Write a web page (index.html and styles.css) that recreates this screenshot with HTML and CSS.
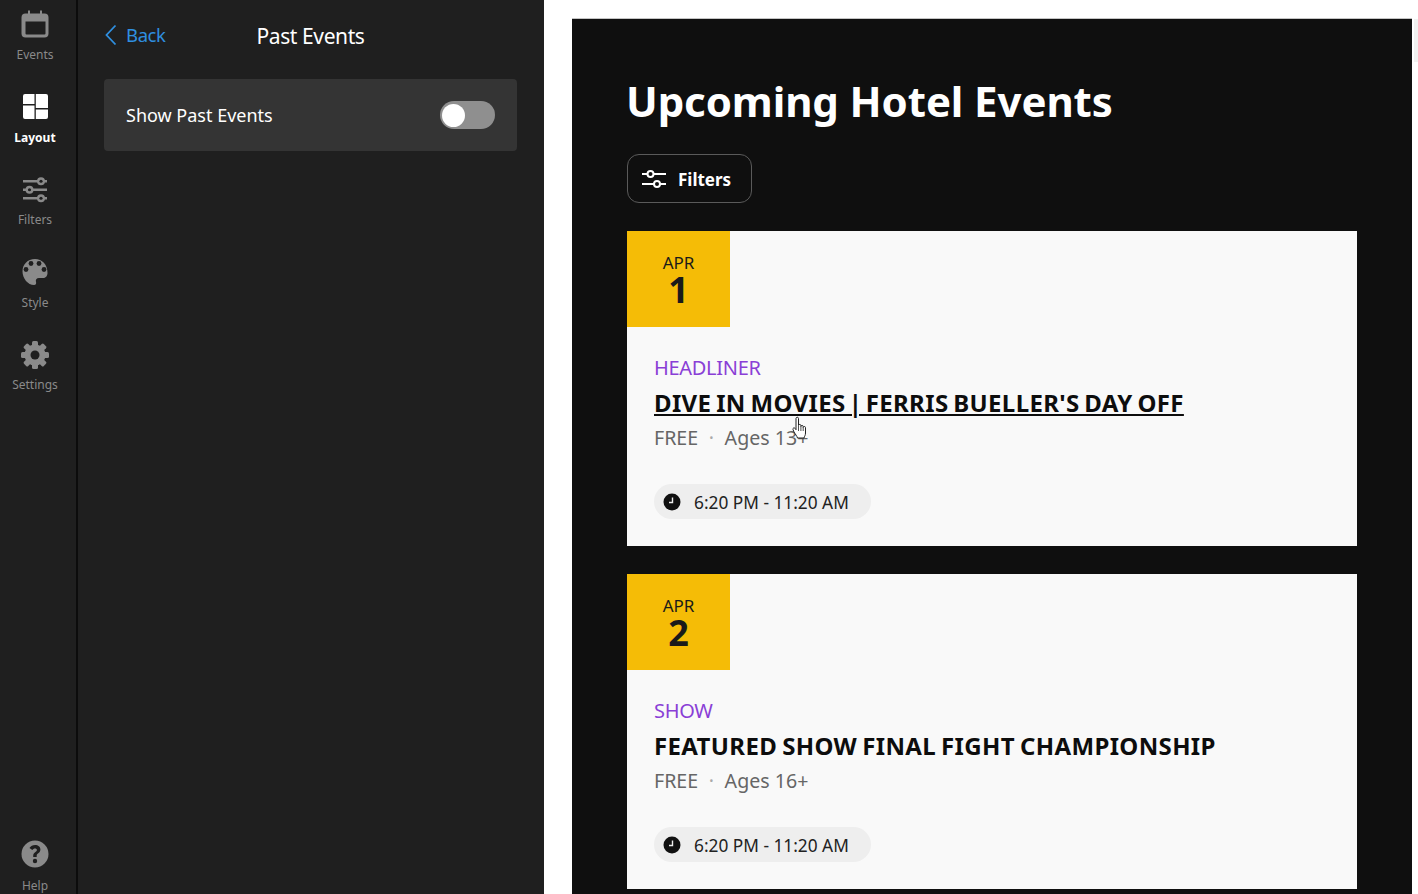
FILE: index.html
```html
<!DOCTYPE html>
<html lang="en">
<head>
  <meta charset="UTF-8">
  <meta name="viewport" content="width=device-width, initial-scale=1.0">
  <title>Upcoming Hotel Events</title>
  <link rel="stylesheet" href="styles.css">
</head>
<body>
  <!-- Editor icon rail -->
  <nav class="rail">
    <a class="rail-item">
      <svg class="rail-icon" viewBox="0 0 30 30"><path fill-rule="evenodd" d="M8 .5h2v3h10v-3h2v3h2.500a4 4 0 0 1 4 4v16a4 4 0 0 1-4 4h-19a4 4 0 0 1-4-4v-16a4 4 0 0 1 4-4H8zM5.500 11.500v12a1 1 0 0 0 1 1h18a1 1 0 0 0 1-1v-12z"/></svg>
      <span>Events</span>
    </a>
    <a class="rail-item active">
      <svg class="rail-icon" viewBox="0 0 30 30"><path d="M5 2h9.500v10H3V4a2 2 0 0 1 2-2zM15.800 2H26a2 2 0 0 1 2 2v12H15.800zM3 13.500h11.500V27H5a2 2 0 0 1-2-2zM15.800 17.500H28V25a2 2 0 0 1-2 2H15.800z"/></svg>
      <span>Layout</span>
    </a>
    <a class="rail-item">
      <svg class="rail-icon" viewBox="0 0 30 30">
        <path d="M3 5h24v2.500H3zM3 13.500h24V16H3zM3 22h24v2.500H3z"/>
        <circle cx="21" cy="6.250" r="4"/><circle cx="9.500" cy="14.750" r="4"/><circle cx="21" cy="23.250" r="4"/>
        <circle class="hole" cx="21" cy="6.250" r="1.600"/><circle class="hole" cx="9.500" cy="14.750" r="1.600"/><circle class="hole" cx="21" cy="23.250" r="1.600"/>
      </svg>
      <span>Filters</span>
    </a>
    <a class="rail-item">
      <svg class="rail-icon" viewBox="0 0 30 30">
        <path d="M15 2C7.500 2 2.500 7.500 2.500 14.500S8 28 14 28c2 0 2.500-1.500 2-3-.7-2 .5-4 3-4h4c2.500 0 4.500-2 4.500-5C27.500 7.500 22 2 15 2z"/>
        <circle class="hole" cx="11" cy="6.500" r="2.400"/><circle class="hole" cx="19" cy="6.500" r="2.400"/><circle class="hole" cx="24" cy="12.500" r="2.400"/><circle class="hole" cx="6" cy="12.500" r="2.400"/>
      </svg>
      <span>Style</span>
    </a>
    <a class="rail-item">
      <svg class="rail-icon" viewBox="0 0 30 30">
        <circle cx="15" cy="15" r="10.500"/>
        <rect x="12" y="1" width="6" height="28" rx="1.500"/>
        <rect x="12" y="1" width="6" height="28" rx="1.500" transform="rotate(45 15 15)"/>
        <rect x="12" y="1" width="6" height="28" rx="1.500" transform="rotate(90 15 15)"/>
        <rect x="12" y="1" width="6" height="28" rx="1.500" transform="rotate(135 15 15)"/>
        <circle class="hole" cx="15" cy="15" r="4.500"/>
      </svg>
      <span>Settings</span>
    </a>
    <a class="rail-item rail-help">
      <svg class="rail-icon" viewBox="0 0 30 30"><path fill-rule="evenodd" d="M15 1.500a13.500 13.500 0 1 0 0 27 13.500 13.500 0 0 0 0-27zM16.700 18h-3.500v-1.300c0-2 1-2.900 2.200-3.800 1-.7 1.500-1.200 1.500-2 0-1-.8-1.500-1.900-1.500-1.200 0-2 .6-2.700 1.700L9.500 9C10.700 7 12.600 6 15.100 6c3 0 5.300 1.600 5.300 4.500 0 2-1.100 3-2.400 4-1 .7-1.300 1.200-1.300 2zM15 19.800a2.200 2.200 0 1 1 0 4.400 2.200 2.200 0 0 1 0-4.400z"/></svg>
      <span>Help</span>
    </a>
  </nav>

  <!-- Settings panel -->
  <aside class="panel">
    <div class="panel-head">
      <a class="back">
        <svg class="back-icon" viewBox="0 0 12 22"><path d="M10.500 1.500 1.500 11l9 9.500"/></svg>
        <span>Back</span>
      </a>
      <h2>Past Events</h2>
    </div>
    <div class="setting">
      <span>Show Past Events</span>
      <div class="toggle"><div class="knob"></div></div>
    </div>
  </aside>

  <!-- Widget preview -->
  <main class="stage">
    <div class="preview">
      <h1>Upcoming Hotel Events</h1>
      <button class="filters">
        <svg class="filters-icon" viewBox="0 0 24 18"><path d="M0 4h5.500M11.500 4H24M0 14h12M18 14h6"/><circle cx="8.500" cy="4" r="3"/><circle cx="15" cy="14" r="3"/></svg>
        <span class="filters-label">Filters</span>
      </button>

      <article class="card">
        <div class="date"><span class="month">APR</span><span class="day">1</span></div>
        <div class="card-body">
          <div class="tag">HEADLINER</div>
          <h3 class="hovered">DIVE IN MOVIES <span class="pipe">|</span> FERRIS BUELLER'S DAY OFF</h3>
          <p class="meta">FREE <i>·</i> Ages 13+</p>
          <div class="time">
            <svg class="clock" viewBox="0 0 18 18"><circle cx="9" cy="9" r="8.500" fill="#111"/><path d="M9.500 4.500v5H6" fill="none" stroke="#eee" stroke-width="1.400"/></svg>
            <span class="time-label">6:20 PM - 11:20 AM</span>
          </div>
        </div>
        <svg class="cursor" viewBox="0 0 16 24"><path d="M4 2.500c0-1.700 2.500-1.700 2.500 0v7c0-1.400 2.400-1.400 2.400 0v1c0-1.400 2.300-1.400 2.300 0v1c0-1.300 2.300-1.300 2.300 0v5.500c0 2.500-1 3-1.500 5H5.500c-.5-2-2-3.500-3.500-6l-1-2.500c-.5-1.500 1.300-2.200 2.200-1l.8 1.200z" fill="#fff" stroke="#222" stroke-width="1"/><path d="M6.500 10v5M8.900 10.500V15M11.200 11.500V15" fill="none" stroke="#222" stroke-width=".8"/></svg>
      </article>

      <article class="card">
        <div class="date"><span class="month">APR</span><span class="day">2</span></div>
        <div class="card-body">
          <div class="tag">SHOW</div>
          <h3>FEATURED SHOW FINAL FIGHT CHAMPIONSHIP</h3>
          <p class="meta">FREE <i>·</i> Ages 16+</p>
          <div class="time">
            <svg class="clock" viewBox="0 0 18 18"><circle cx="9" cy="9" r="8.500" fill="#111"/><path d="M9.500 4.500v5H6" fill="none" stroke="#eee" stroke-width="1.400"/></svg>
            <span class="time-label">6:20 PM - 11:20 AM</span>
          </div>
        </div>
      </article>
    </div>
    <div class="scroll-thumb"></div>
  </main>
</body>
</html>
```

FILE: styles.css
```css
* {
  box-sizing: border-box;
}

body {
  margin: 0;
  height: 894px;
  overflow: hidden;
  display: flex;
  background-color: #ffffff;
  font-family: 'Noto Sans', 'Open Sans', sans-serif;
}

/* Icon rail */
.rail {
  width: 78px;
  height: 894px;
  flex-shrink: 0;
  display: flex;
  flex-direction: column;
  align-items: stretch;
  padding: 9.5px 6px 0 0;
  background-color: #1f1f1f;
  border-right: 2px solid #0c0c0c;
}

.rail-item {
  height: 82.5px;
  display: flex;
  flex-direction: column;
  align-items: center;
  color: #8a8a8a;
  font-size: 12px;
  line-height: 16px;
}

.rail-item.active {
  color: #ffffff;
  font-weight: 700;
}

.rail-icon {
  width: 30px;
  height: 30px;
  margin-bottom: 7.5px;
  fill: currentColor;
}

.rail-icon .hole {
  fill: #1f1f1f;
}

.rail-help {
  margin-top: auto;
  height: 55px;
}

.rail-help .rail-icon {
  margin-bottom: 9px;
}

/* Settings panel */
.panel {
  width: 466px;
  flex-shrink: 0;
  padding: 0 27px 0 26px;
  background-color: #1f1f1f;
  color: #ffffff;
}

.panel-head {
  height: 79px;
  position: relative;
  display: flex;
  justify-content: center;
  align-items: center;
  padding-bottom: 7px;
}

.panel-head h2 {
  margin: 0;
  font-size: 21px;
  font-weight: 400;
  letter-spacing: -0.4px;
}

.back {
  position: absolute;
  left: 1px;
  top: 24px;
  display: flex;
  align-items: center;
  gap: 9px;
  color: #2f8fe0;
  font-size: 18.5px;
  line-height: 22px;
  letter-spacing: -0.4px;
}

.back-icon {
  width: 12px;
  height: 22px;
  fill: none;
  stroke: currentColor;
  stroke-width: 1.8;
}

.setting {
  height: 72px;
  display: flex;
  justify-content: space-between;
  align-items: center;
  padding: 0 22px;
  background-color: #343434;
  border-radius: 4px;
  font-size: 18px;
}

.toggle {
  width: 55px;
  height: 28px;
  padding: 2.5px 2px;
  background-color: #8f8f8f;
  border-radius: 14px;
}

.knob {
  width: 23px;
  height: 23px;
  background-color: #ffffff;
  border-radius: 50%;
}

/* Preview */
.stage {
  flex: 1;
  position: relative;
  padding: 18px 6px 0 28px;
}

.scroll-thumb {
  position: absolute;
  right: 0;
  top: 19px;
  width: 4px;
  height: 43px;
  background-color: #f1f1f1;
}

.preview {
  height: 900px;
  padding: 0 55px;
  background-color: #0f0f0f;
  border-top: 1px solid #c4c4c4;
}

.preview h1 {
  margin: 0 0 0 -1px;
  padding-top: 53px;
  color: #ffffff;
  font-size: 42px;
  line-height: 58px;
  font-weight: 700;
  letter-spacing: -0.1px;
}

.filters {
  display: flex;
  align-items: center;
  gap: 12px;
  width: 125px;
  height: 49px;
  margin: 24px 0 28px;
  padding: 0 14px;
  background-color: transparent;
  border: 1px solid #5a5a5a;
  border-radius: 12px;
  color: #ffffff;
  font-family: inherit;
  font-size: 17px;
  font-weight: 700;
}

.filters-label {
  padding-top: 2px;
}

.filters-icon {
  width: 24px;
  height: 18px;
  fill: none;
  stroke: #ffffff;
  stroke-width: 2;
}

.card {
  position: relative;
  height: 315px;
  margin-bottom: 28px;
  background-color: #f9f9f9;
}

.date {
  width: 103px;
  height: 96px;
  display: flex;
  flex-direction: column;
  align-items: center;
  padding-top: 20px;
  background-color: #f5bc06;
  color: #1a1a1a;
}

.month {
  font-size: 17px;
  line-height: 24px;
}

.day {
  font-size: 36px;
  line-height: 30px;
  font-weight: 700;
}

.card-body {
  padding: 26px 27px 0;
}

.tag {
  color: #8a3fd6;
  font-size: 20px;
  line-height: 30px;
  letter-spacing: -0.3px;
}

.card h3 {
  margin: 2px 0 0;
  color: #0d0d0d;
  font-size: 24px;
  line-height: 36px;
  font-weight: 700;
  letter-spacing: 0.35px;
  word-spacing: -1.5px;
}

.card h3.hovered {
  text-decoration: underline;
  word-spacing: -1.8px;
}

.pipe {
  margin: 0 -1.5px;
}

.meta {
  margin: 2px 0 0;
  color: #666666;
  font-size: 19.6px;
  line-height: 30px;
}

.meta i {
  margin: 0 5.5px;
  font-style: normal;
  color: #aaaaaa;
}

.time {
  display: inline-flex;
  align-items: center;
  gap: 13px;
  height: 35px;
  margin-top: 31px;
  padding: 0 22px 0 9px;
  background-color: #eeeeee;
  border-radius: 18px;
  color: #222222;
  font-size: 17.3px;
}

.time-label {
  padding-top: 2px;
}

.clock {
  width: 18px;
  height: 18px;
}

.cursor {
  position: absolute;
  left: 164px;
  top: 185px;
  width: 18px;
  height: 24px;
}
```
